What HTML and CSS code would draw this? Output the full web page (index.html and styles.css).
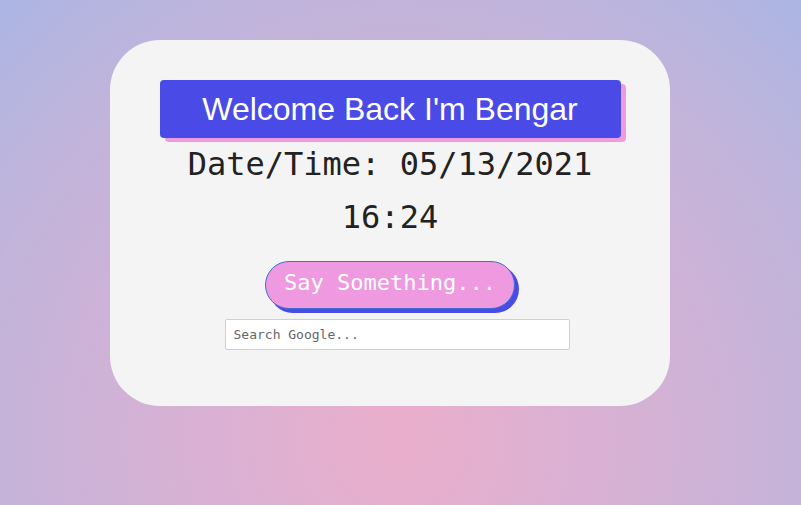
FILE: index.html
```html
<!DOCTYPE html>
<html>
<head>
<meta charset="utf-8">
<link rel="stylesheet" href="styles.css">
</head>
<body>
<main class="page">
  <section class="card">
    <h1 class="welcome">Welcome Back I'm Bengar</h1>
    <p class="datetime">Date/Time: 05/13/2021<br>16:24</p>
    <button class="say">Say Something...</button>
    <input class="search" type="text" placeholder="Search Google...">
  </section>
</main>
</body>
</html>
```
FILE: styles.css
```css
html, body {
  margin: 0;
  height: 100%;
}
body {
  background: radial-gradient(circle farthest-corner at 50% 87%, #eaaecb 0%, #d8b1d4 35%, #c3b4da 72%, #abb5e3 100%);
  font-family: "DejaVu Sans Mono", monospace;
}
.page {
  padding: 40px 0 0 110px;
}
.card {
  width: 560px;
  height: 366px;
  box-sizing: border-box;
  background: #f4f4f4;
  border-radius: 50px;
  padding-top: 40px;
  display: flex;
  flex-direction: column;
  align-items: center;
}
.welcome {
  margin: 0;
  width: 461px;
  height: 58px;
  box-sizing: border-box;
  background: #4a4ae6;
  color: #fff;
  border-radius: 4px;
  box-shadow: 5px 4px 0 #ee99e0;
  font-family: "Liberation Sans", Arial, sans-serif;
  font-weight: normal;
  font-size: 32px;
  line-height: 58px;
  text-align: center;
}
.datetime {
  margin: 0;
  font-size: 32px;
  line-height: 53px;
  color: #222;
  text-align: center;
}
.say {
  margin-top: 17px;
  width: 250px;
  height: 48px;
  border: 1px solid #3d6fd3;
  border-radius: 24px;
  background: #ee99e0;
  color: #fff;
  font-family: "DejaVu Sans Mono", monospace;
  font-size: 22px;
  box-shadow: 4px 4px 0 #4a4ae6;
  padding: 0 0 6px;
}
.search {
  margin: 10px 0 0 14px;
  width: 345px;
  height: 31px;
  box-sizing: border-box;
  border: 1px solid #cfcfcf;
  border-radius: 2px;
  background: #fff;
  padding: 0 8px;
  font-family: "DejaVu Sans Mono", monospace;
  font-size: 13px;
}
.search::placeholder {
  color: #666;
}
```
